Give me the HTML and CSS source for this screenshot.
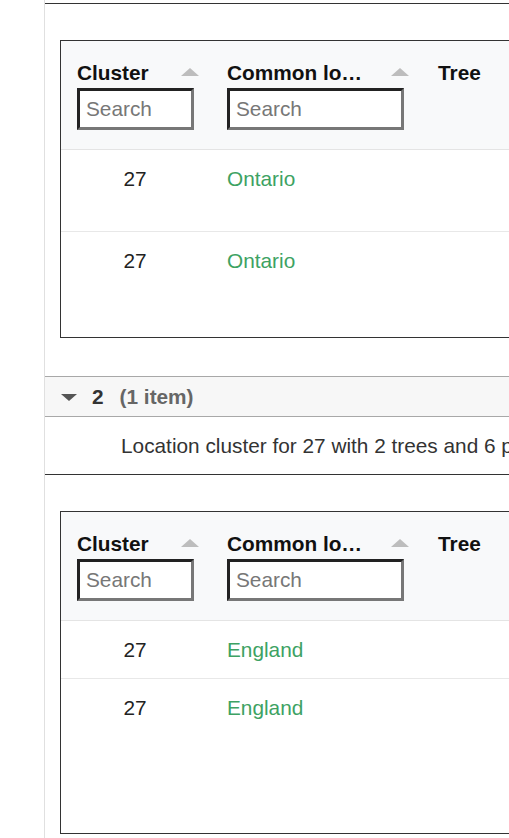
FILE: index.html
```html
<!DOCTYPE html>
<html>
<head>
<meta charset="utf-8">
<link rel="stylesheet" href="styles.css">
</head>
<body>
<div class="page">
  <div class="table-wrap">
    <div class="grid">
      <div class="thead">
        <div class="th c1">
          <div class="th-title"><span>Cluster</span><span class="sort"></span></div>
          <input class="search" placeholder="Search">
        </div>
        <div class="th c2">
          <div class="th-title"><span>Common lo…</span><span class="sort"></span></div>
          <input class="search" placeholder="Search">
        </div>
        <div class="th c3">
          <div class="th-title"><span>Tree</span></div>
        </div>
      </div>
      <div class="tr r-a1">
        <div class="td c1 num">27</div>
        <div class="td c2 link">Ontario</div>
      </div>
      <div class="tr r-a2 last">
        <div class="td c1 num">27</div>
        <div class="td c2 link">Ontario</div>
      </div>
    </div>
  </div>

  <div class="group-head">
    <span class="caret"></span>
    <span class="group-key">2</span>
    <span class="group-count">(1 item)</span>
  </div>
  <div class="group-desc">Location cluster for 27 with 2 trees and 6 places</div>

  <div class="table-wrap">
    <div class="grid">
      <div class="thead">
        <div class="th c1">
          <div class="th-title"><span>Cluster</span><span class="sort"></span></div>
          <input class="search" placeholder="Search">
        </div>
        <div class="th c2">
          <div class="th-title"><span>Common lo…</span><span class="sort"></span></div>
          <input class="search" placeholder="Search">
        </div>
        <div class="th c3">
          <div class="th-title"><span>Tree</span></div>
        </div>
      </div>
      <div class="tr r-b1">
        <div class="td c1 num">27</div>
        <div class="td c2 link">England</div>
      </div>
      <div class="tr r-b2 last">
        <div class="td c1 num">27</div>
        <div class="td c2 link">England</div>
      </div>
    </div>
  </div>
</div>
</body>
</html>
```

FILE: styles.css
```css
html, body {
  margin: 0;
  padding: 0;
  overflow: hidden;
  background: #fff;
}
body {
  font-family: "Liberation Sans", Arial, sans-serif;
  font-size: 20.8px;
  color: #222;
  height: 838px;
}
.page {
  margin-left: 44px;
  border-left: 1px solid #e0e0e0;
  width: 760px;
  min-height: 838px;
  padding-top: 3px;
  box-sizing: border-box;
}
.table-wrap {
  border-top: 1px solid #333;
  padding: 36px 0 38px 15px;
}
.grid {
  border: 1px solid #333;
  width: 700px;
  background: #fff;
}
.thead {
  display: flex;
  background: #f8f9fa;
  padding: 20px 0 19px;
  border-bottom: 1px solid #e4e4e4;
}
.th {
  box-sizing: border-box;
  padding-left: 16px;
  font-weight: bold;
  color: #111;
}
.c1 { width: 150px; }
.c2 { width: 211px; }
.th-title {
  display: flex;
  justify-content: space-between;
  align-items: center;
  height: 24px;
  line-height: 24px;
  margin-bottom: 3px;
  white-space: nowrap;
}
.th.c1 .th-title { width: 122px; }
.th.c2 .th-title { width: 182px; }
.sort {
  width: 0;
  height: 0;
  border-left: 9px solid transparent;
  border-right: 9px solid transparent;
  border-bottom: 8px solid #bdbdbd;
  margin-top: -2px;
}
.search {
  display: block;
  box-sizing: border-box;
  height: 42px;
  margin: 0;
  padding: 0 6px;
  font-family: "Liberation Sans", Arial, sans-serif;
  font-size: 20.8px;
  color: #222;
  background: #fff;
  border-style: solid;
  border-width: 3px;
  border-color: #222 #777 #777 #222;
  outline: none;
}
.search::placeholder { color: #777; }
.th.c1 .search { width: 117px; }
.th.c2 .search { width: 177px; }
.tr {
  display: flex;
  box-sizing: border-box;
  padding-top: 17px;
  border-bottom: 1px solid #e8e8e8;
  line-height: 24px;
}
.tr.last { border-bottom: none; }
.r-a1 { height: 82px; }
.r-a2 { height: 105px; }
.r-b1 { height: 58px; }
.r-b2 { height: 154px; }
.td { box-sizing: border-box; }
.td.c1 {
  padding: 0 18px 0 16px;
  text-align: center;
  color: #222;
}
.td.c2 {
  padding-left: 16px;
}
.link { color: #3da263; }
.group-head {
  display: flex;
  align-items: center;
  height: 39px;
  background: #f7f7f7;
  border-top: 1px solid #a8a8a8;
  border-bottom: 1px solid #a8a8a8;
  padding-left: 16px;
  font-weight: bold;
}
.caret {
  width: 0;
  height: 0;
  border-left: 8px solid transparent;
  border-right: 8px solid transparent;
  border-top: 7px solid #555;
  margin-right: 15px;
  margin-top: 1px;
}
.group-key { color: #333; margin-right: 16px; }
.group-count { color: #666; }
.group-desc {
  height: 57px;
  line-height: 57px;
  padding-left: 76px;
  color: #333;
  white-space: nowrap;
}
```
